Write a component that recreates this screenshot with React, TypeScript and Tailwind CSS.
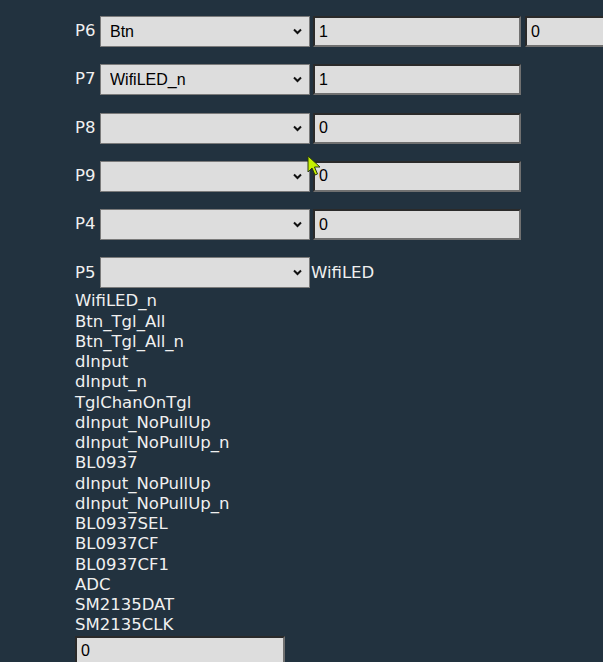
import React from 'react';

// ── Data ──────────────────────────────────────────────────────────────────────

const ROWS: { pin: string; role: string; values: string[]; note?: string }[] = [
  { pin: 'P6', role: 'Btn', values: ['1', '0'] },
  { pin: 'P7', role: 'WifiLED_n', values: ['1'] },
  { pin: 'P8', role: '', values: ['0'] },
  { pin: 'P9', role: '', values: ['0'] },
  { pin: 'P4', role: '', values: ['0'] },
  { pin: 'P5', role: '', values: [], note: 'WifiLED' },
];

const ROLES = [
  'WifiLED_n',
  'Btn_Tgl_All',
  'Btn_Tgl_All_n',
  'dInput',
  'dInput_n',
  'TglChanOnTgl',
  'dInput_NoPullUp',
  'dInput_NoPullUp_n',
  'BL0937',
  'dInput_NoPullUp',
  'dInput_NoPullUp_n',
  'BL0937SEL',
  'BL0937CF',
  'BL0937CF1',
  'ADC',
  'SM2135DAT',
  'SM2135CLK',
];

const inputCls =
  'h-[31px] w-[208px] shrink-0 border-2 border-t-[#2a2a2a] border-l-[#2a2a2a] border-r-[#707070] border-b-[#707070] bg-[#dddddd] pl-[4px] text-[16px] text-black font-["Liberation_Sans",Arial,sans-serif] outline-none';

// ── Pieces ────────────────────────────────────────────────────────────────────

function RoleSelect({ role }: { role: string }) {
  return (
    <div className="relative h-[31px] w-[210px] shrink-0">
      <select
        defaultValue={role}
        className='h-full w-full appearance-none border border-[#7a7a7a] bg-[#dddddd] pl-[9px] text-[16px] text-black font-["Liberation_Sans",Arial,sans-serif] outline-none'
      >
        <option value="">{''}</option>
        {role && <option value={role}>{role}</option>}
      </select>
      <svg className="pointer-events-none absolute right-[8px] top-[12px]" width="9" height="7" viewBox="0 0 9 7">
        <path d="M1 1.5 L4.5 5 L8 1.5" fill="none" stroke="#111" strokeWidth="2" />
      </svg>
    </div>
  );
}

function PinRow({ pin, role, values, note }: (typeof ROWS)[number]) {
  return (
    <div className="flex h-[31px] items-center">
      <span className="w-[25px] shrink-0 text-[16.5px]">{pin}</span>
      <RoleSelect role={role} />
      {values.length > 0 && (
        <div className="ml-[3px] flex gap-[4px]">
          {values.map((v, i) => (
            <input key={i} defaultValue={v} className={inputCls} />
          ))}
        </div>
      )}
      {note && <span className="ml-[1px] text-[16.5px]">{note}</span>}
    </div>
  );
}

function Cursor() {
  return (
    <svg className="absolute left-[307px] top-[155px]" width="14" height="22" viewBox="0 0 14 22">
      <path d="M1 1 L1 17 L5 13 L8 20 L10.5 19 L7.5 12 L13 12 Z" fill="#c6f000" stroke="#2b3a10" strokeWidth="1" strokeLinejoin="round" />
    </svg>
  );
}

// ── Page ──────────────────────────────────────────────────────────────────────

export default function App() {
  return (
    <div className='relative h-[662px] w-[603px] overflow-hidden bg-[#22323f] pl-[75px] pt-[16px] text-[#f0f0f0] font-["DejaVu_Sans",Verdana,sans-serif]'>
      <div className="flex w-[700px] flex-col gap-[17.3px]">
        {ROWS.map((r) => (
          <PinRow key={r.pin} {...r} />
        ))}
      </div>

      <ul className="mt-[3px] text-[16.5px] leading-[20.25px]">
        {ROLES.map((r, i) => (
          <li key={i}>{r}</li>
        ))}
      </ul>

      <input defaultValue="0" className={inputCls + ' w-[210px]'} />

      <Cursor />
    </div>
  );
}
